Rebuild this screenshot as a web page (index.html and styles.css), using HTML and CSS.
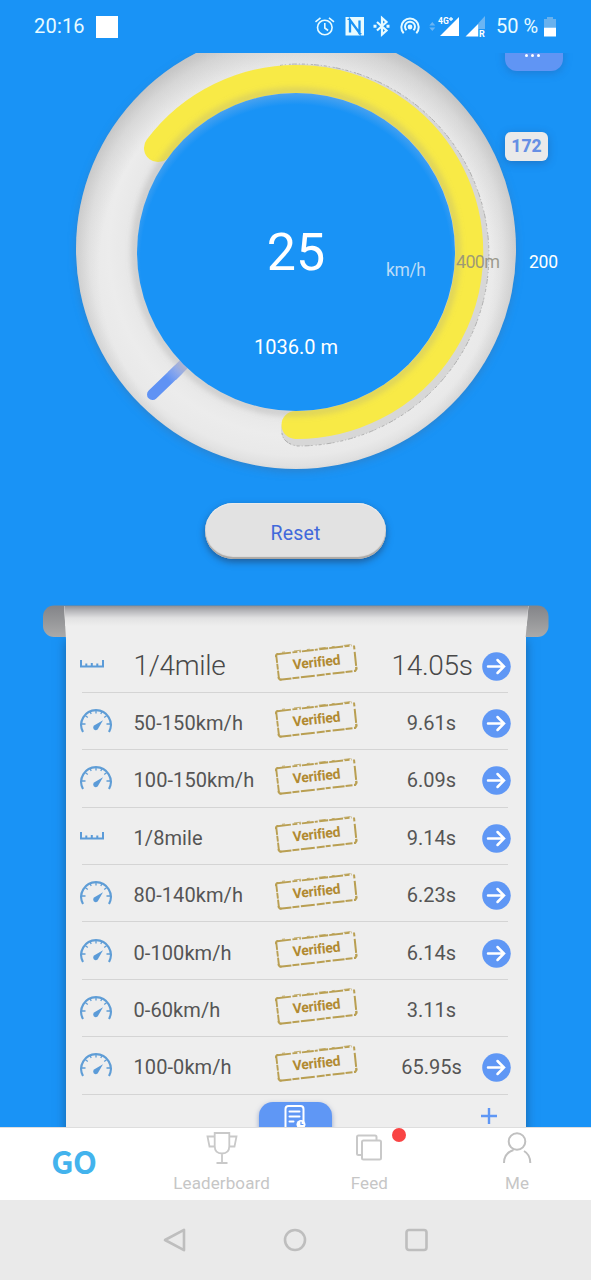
FILE: index.html
```html
<!DOCTYPE html>
<html lang="en">
<head>
<meta charset="utf-8">
<title>Performance</title>
<link rel="stylesheet" href="styles.css">
</head>
<body>
<svg class="defs" width="0" height="0">
  <symbol id="ruler" viewBox="0 0 24 10"><path d="M1 1v6.500h22V1M6.300 4.500V7M11.800 4V7M17.300 4.500V7" fill="none" stroke="#5b9bd8" stroke-width="2"/></symbol>
  <symbol id="meter" viewBox="0 0 32 26">
    <path d="M3 24A14.800 14.800 0 1 1 29 24" fill="none" stroke="#5f9dd6" stroke-width="2.100"/>
    <path d="M2 16h3.500M26.500 16h3.500M5.500 7.800l2.300 1.700M10 3.500l1.200 2.500M16 2v3.500M22 3.500l-1.200 2.500M26.500 7.800l-2.300 1.700" fill="none" stroke="#5f9dd6" stroke-width="1.300"/>
    <path d="M23 12.300 18.500 20A2.700 2.700 0 1 1 15.300 16.800Z" fill="#5b9bd8"/>
  </symbol>
  <symbol id="arrow" viewBox="0 0 29 29"><circle cx="14.500" cy="14.500" r="14.300" fill="#5f97f5"/><path d="M6 14.500h16M15.500 8l6.500 6.500-6.500 6.500" fill="none" stroke="#fff" stroke-width="2.500" stroke-linecap="round"/></symbol>
  <symbol id="frame" viewBox="0 0 84 40">
    <g fill="none" stroke="#b99f52">
      <path d="M3 11.200 78 2.500" stroke-width="1.900" stroke-dasharray="14 1.500 5 2 1.500 1 12 1 3 1.500 9 1"/>
      <path d="M8 9.300 77 1.600" stroke-width=".8" stroke-dasharray="3 9 7 6"/>
      <path d="M80 2.500 82.500 26.500" stroke-width="2" stroke-dasharray="4 2.500 14 1"/>
      <path d="M5.500 36.800 82 27.800" stroke-width="2" stroke-dasharray="12 1 7 1.500 14 2 8 1 5 2"/>
      <path d="M2.200 12 5 36" stroke-width="1.900" stroke-dasharray="8 .8 6 1"/>
      <path d="M2 14q-.5-3 2-3M4.500 34q0 3 3 2.500M82.200 24q.8 3.500-2 4" stroke-width="1.900"/>
    </g>
  </symbol>
</svg>

<div class="phone">
  <header class="status">
    <span class="clock">20:16</span>
    <span class="notice"></span>
    <svg class="status-icons" width="172" height="24" viewBox="314 15 172 24" fill="none" stroke="#e8fbff" stroke-width="1.600">
      <circle cx="324.800" cy="27.500" r="7.300"/><path d="M324.800 23v5l3.300 2.500M315.500 21.800l5-4M334 21.800l-5-4"/>
      <path d="M345.500 17H364v18.500h-18.500Z" fill="#e8fbff" stroke="none"/><path d="M350 32.500V20l9.500 13V20.500" stroke="#1993f6" stroke-width="2.300"/><path d="M347.500 19.300h3M358.500 33.700h3" stroke="#1993f6" stroke-width="1.300"/>
      <path d="M377 22l9.500 8.500-4.500 4V18l4.500 4-9.500 8.500" stroke-width="2.200"/><path d="M373.500 26.300h3M386.500 26.300h3" stroke-width="3"/>
      <path d="M403.700 33.200a8.700 8.700 0 1 1 12.600 0M406.500 30.200a5 5 0 1 1 7 0" stroke-width="2"/><circle cx="410" cy="27" r="2.400" fill="#e8fbff" stroke="none"/>
      <path d="M429.300 25.500l3-3.500 3 3.500ZM429.300 27.500l3 3.500 3-3.500Z" fill="#6bb5f3" stroke="none"/>
      <path d="M440 36 459 17v19ZM465.500 36.500l13-13v13Z" fill="#fff" stroke="none"/><path d="M478.500 23l6.500-7v13h-6.500Z" fill="#6bb5f3" stroke="none"/>
      <path d="M478.500 29h8v9h-8Z" fill="#1993f6" stroke="none"/>
      <text class="net" x="438" y="23.500">4G</text><path d="M449 19h4M451 17v4" stroke-width="1.300"/><text class="roam" x="479" y="36.500">R</text>
    </svg>
    <span class="percent">50 %</span>
    <svg width="12" height="21" viewBox="0 0 12 21"><path d="M3 1h6v2h3v8H0V3h3Z" fill="#68b1ee"/><path d="M0 11.500h12V20.500H0Z" fill="#fff"/></svg>
  </header>

  <main class="content">
    <section class="gauge">
      <svg class="dial" width="591" height="440" viewBox="0 53 591 440">
        <defs>
          <radialGradient id="ring" gradientUnits="userSpaceOnUse" cx="296" cy="249" r="220">
            <stop offset=".72" stop-color="#dfdfdf"/><stop offset=".77" stop-color="#e8e8e8"/><stop offset=".85" stop-color="#ececec"/><stop offset=".94" stop-color="#e9e9e9"/><stop offset="1" stop-color="#dedede"/>
          </radialGradient>
          <radialGradient id="edge" gradientUnits="userSpaceOnUse" cx="296" cy="269" r="234">
            <stop offset=".84" stop-color="#777" stop-opacity="0"/><stop offset="1" stop-color="#777" stop-opacity=".24"/>
          </radialGradient>
          <radialGradient id="hole" gradientUnits="userSpaceOnUse" cx="296" cy="260" r="167">
            <stop offset=".93" stop-color="#1993f6"/><stop offset="1" stop-color="#4aa2ef"/>
          </radialGradient>
          <linearGradient id="tick" gradientUnits="userSpaceOnUse" x1="168" y1="380" x2="184" y2="365"><stop offset="0" stop-color="#5f92f4"/><stop offset="1" stop-color="#b5bde4"/></linearGradient>
          <filter id="soft" x="-10%" y="-10%" width="120%" height="120%"><feGaussianBlur stdDeviation="5"/></filter>
          <filter id="soft2" x="-10%" y="-10%" width="120%" height="120%"><feGaussianBlur stdDeviation="3"/></filter>
        </defs>
        <circle cx="296" cy="252" r="219" fill="#456f9c" opacity=".5" filter="url(#soft)"/>
        <circle cx="296" cy="249" r="220" fill="url(#ring)"/>
        <circle cx="296" cy="249" r="220" fill="url(#edge)"/>
        <g fill="none" stroke-linecap="round">
          <path d="M299 80A175 175 0 0 1 297 430" stroke="#d7d7d7" stroke-width="32"/>
          <path d="M280 65.500Q288 64 299 64A191 191 0 0 1 297 446Q283 443 282 433" stroke="#aaa" stroke-width=".9" stroke-dasharray="3 2 1 3 2 1 5 2 1 2" stroke-linecap="butt"/>
          <path d="M158 148A173 173 0 1 1 295.500 425" stroke="#f8ea46" stroke-width="28"/>
        </g>
        <path d="M178 370 152.500 394.500" stroke="url(#tick)" stroke-width="11" stroke-linecap="round"/>
        <path d="M172 376l12-12" stroke="url(#tick)" stroke-width="11"/>
        <circle cx="296" cy="252" r="161" fill="none" stroke="#999" stroke-opacity=".35" stroke-width="6" filter="url(#soft2)"/>
        <circle cx="296" cy="252" r="159" fill="url(#hole)"/>
        <g class="dial-labels">
          <text x="296" y="269.500" font-size="52" text-anchor="middle">25</text>
          <text x="296" y="354" font-size="20" text-anchor="middle" textLength="84">1036.0 m</text>
          <text x="386" y="276" font-size="17.500" fill="#bcdcf7" textLength="40">km/h</text>
          <text x="456" y="268" font-size="18" fill="#8f8c7d" fill-opacity=".85" textLength="44">400m</text>
          <text x="529" y="268" font-size="17.500" textLength="29">200</text>
        </g>
      </svg>
      <div class="more"><i></i><i></i><i></i></div>
      <div class="badge">172</div>
    </section>

    <button class="reset">Reset</button>

    <section class="sheet">
      <svg class="roll" width="507" height="34" viewBox="42 605 507 34">
        <defs>
          <linearGradient id="rod" x2="0" y2="1"><stop offset="0" stop-color="#838488"/><stop offset="1" stop-color="#aaa"/></linearGradient>
          <linearGradient id="fold" x2="0" y2="1"><stop offset="0" stop-color="#929297"/><stop offset=".2" stop-color="#b1b1b5"/><stop offset=".6" stop-color="#e1e1e2"/><stop offset="1" stop-color="#eee"/></linearGradient>
        </defs>
        <rect x="43" y="605.500" width="505.500" height="31.500" rx="11" fill="url(#rod)"/>
        <path d="M64 606H528.500L525.500 639H66Z" fill="#eee"/><path d="M64.300 606H528.200L526.700 626H65.300Z" fill="url(#fold)"/>
      </svg>
      <div class="paper">
        <div class="row lead"><svg class="ruler"><use href="#ruler"/></svg><span class="name">1/4mile</span><span class="stamp"><svg><use href="#frame"/></svg><b>Verified</b></span><span class="time">14.05s</span><svg class="go"><use href="#arrow"/></svg></div>
        <div class="row"><svg class="meter"><use href="#meter"/></svg><span class="name">50-150km/h</span><span class="stamp"><svg><use href="#frame"/></svg><b>Verified</b></span><span class="time">9.61s</span><svg class="go"><use href="#arrow"/></svg></div>
        <div class="row"><svg class="meter"><use href="#meter"/></svg><span class="name">100-150km/h</span><span class="stamp"><svg><use href="#frame"/></svg><b>Verified</b></span><span class="time">6.09s</span><svg class="go"><use href="#arrow"/></svg></div>
        <div class="row"><svg class="ruler"><use href="#ruler"/></svg><span class="name">1/8mile</span><span class="stamp"><svg><use href="#frame"/></svg><b>Verified</b></span><span class="time">9.14s</span><svg class="go"><use href="#arrow"/></svg></div>
        <div class="row"><svg class="meter"><use href="#meter"/></svg><span class="name">80-140km/h</span><span class="stamp"><svg><use href="#frame"/></svg><b>Verified</b></span><span class="time">6.23s</span><svg class="go"><use href="#arrow"/></svg></div>
        <div class="row"><svg class="meter"><use href="#meter"/></svg><span class="name">0-100km/h</span><span class="stamp"><svg><use href="#frame"/></svg><b>Verified</b></span><span class="time">6.14s</span><svg class="go"><use href="#arrow"/></svg></div>
        <div class="row"><svg class="meter"><use href="#meter"/></svg><span class="name">0-60km/h</span><span class="stamp"><svg><use href="#frame"/></svg><b>Verified</b></span><span class="time">3.11s</span></div>
        <div class="row"><svg class="meter"><use href="#meter"/></svg><span class="name">100-0km/h</span><span class="stamp"><svg><use href="#frame"/></svg><b>Verified</b></span><span class="time">65.95s</span><svg class="go"><use href="#arrow"/></svg></div>
        <div class="actions">
          <div class="report"><svg width="26" height="28" viewBox="0 0 26 28" fill="none" stroke="#fff" stroke-width="2" stroke-linecap="round"><path d="M3.500 26V5q0-3 3-3h12q3 0 3 3v12M7.500 7.500h10M7.500 12.500h10M7.500 17.500h4"/><circle cx="19" cy="20.500" r="4.500" fill="#fff" stroke="none"/><path d="M19 18v2.500h2" stroke="#5f97f5" stroke-width="1.200"/></svg></div>
          <svg class="plus" width="16" height="16" viewBox="0 0 16 16"><path d="M8 0v16M0 8h16" stroke="#5f97f5" stroke-width="2.400"/></svg>
        </div>
      </div>
    </section>
  </main>

  <nav class="tabs">
    <div class="tab active">GO</div>
    <div class="tab"><svg width="32" height="34" viewBox="0 0 32 34" fill="none" stroke="#c9c9c9" stroke-width="1.800"><path d="M8.700 2h14.600v13q0 7.500-7.300 7.500T8.700 15ZM8.700 5.500H1.500l2 10h5.500M23.300 5.500h7.200l-2 10H23M16 22.500v9.500M10.500 32h11"/></svg><span>Leaderboard</span></div>
    <div class="tab"><svg width="32" height="34" viewBox="0 0 32 34" fill="none" stroke="#c9c9c9" stroke-width="2"><rect x="9" y="9.500" width="19" height="19" rx="1.500"/><path d="M9 24H5.500q-1.500 0-1.500-1.500V6q0-1.500 1.500-1.500H22q1.500 0 1.500 1.500v3.500"/></svg><span>Feed</span><i class="dot"></i></div>
    <div class="tab"><svg width="32" height="34" viewBox="0 0 32 34" fill="none" stroke="#c0c0c0" stroke-width="2"><circle cx="16" cy="10.500" r="8.300"/><path d="M3 32q0-10 9.500-13M23 20q6.300 3.500 6.300 12"/></svg><span>Me</span></div>
  </nav>

  <footer class="system">
    <svg width="24" height="26" viewBox="0 0 24 26"><path d="M3 13 22 2.800v20.400Z" fill="none" stroke="#bebebe" stroke-width="2.600" stroke-linejoin="round"/></svg>
    <svg width="24" height="26" viewBox="0 0 24 26"><circle cx="12" cy="13" r="10" fill="none" stroke="#bebebe" stroke-width="2.600"/></svg>
    <svg width="24" height="26" viewBox="0 0 24 26"><rect x="2.500" y="3" width="20" height="20" rx="2.500" fill="none" stroke="#bebebe" stroke-width="2.600"/></svg>
  </footer>
</div>
</body>
</html>
```
FILE: styles.css
```css
* { box-sizing: border-box; }
body { margin: 0; font-family: Roboto, sans-serif; background: #1993f6; }
svg { display: block; flex: none; }
.defs { position: absolute; }
.phone { width: 591px; height: 1280px; display: flex; flex-direction: column; overflow: hidden; background: #1993f6; }

.status { height: 53px; flex: none; display: flex; align-items: center; padding: 0 35px 0 34px; color: #e8fbff; }
.clock { font-size: 20px; width: 62px; letter-spacing: .2px; margin-top: -1px; }
.notice { width: 22px; height: 22px; background: #fff; }
.status-icons { margin-left: 196px; }
.net { font: 700 8.5px Roboto, sans-serif; fill: #fff; stroke: none; }
.roam { font: 700 9px Roboto, sans-serif; fill: #fff; stroke: none; }
.percent { font-size: 20px; margin: -1px 0 0 10px; width: 48px; white-space: nowrap; }

.content { height: 1074px; flex: none; overflow: hidden; display: flex; flex-direction: column; align-items: center; }
.gauge { position: relative; width: 591px; height: 450px; flex: none; }
.dial-labels { font-family: Roboto, sans-serif; fill: #fff; }
.more { position: absolute; top: -20px; left: 505px; width: 58px; height: 38px; border-radius: 12px; background: #6095f4; box-shadow: 0 2px 8px rgba(40,90,160,.4); display: flex; justify-content: center; gap: 3px; padding: 21px 3px 0 0; }
.more i { width: 3px; height: 3px; border-radius: 50%; background: #fff; }
.badge { position: absolute; top: 79px; left: 505px; width: 43px; height: 29px; border-radius: 6px; background: #eaeaea; color: #668fe4; font-weight: 800; font-size: 17.5px; line-height: 29px; text-align: center; box-shadow: 0 2px 9px rgba(40,80,140,.45); }

.reset { width: 181px; height: 56px; flex: none; padding: 4px 0 0; border: 0; border-radius: 28px; background: #e2e2e2; color: #4169db; font: 400 19.5px Roboto, sans-serif; letter-spacing: .2px; box-shadow: inset 0 -2px 1px #aba8a5, inset 0 1px 1px #ececec, 0 3px 7px rgba(35,65,105,.65); }

.sheet { width: 507px; margin-top: 46px; display: flex; flex-direction: column; align-items: center; }
.roll { position: relative; z-index: 1; }
.paper { width: 460px; height: 500px; margin-top: -3.5px; padding: 0 14px; background: #eee; box-shadow: 0 4px 10px rgba(25,60,100,.55); }
.row { height: 57.4px; display: grid; grid-template-columns: 54px 140px 84px 34px 80px 10px 32px; align-items: center; color: #555; background: linear-gradient(#d4d4d4,#d4d4d4) 2px 100% / 426px 1px no-repeat; }
.name { grid-column: 2; font-size: 20px; letter-spacing: .08px; padding-top: 3px; white-space: nowrap; }
.time { grid-column: 5; font-size: 20px; text-align: center; padding-top: 3px; white-space: nowrap; }
.lead .name, .lead .time { font-size: 28px; font-weight: 300; letter-spacing: -.3px; padding-top: 3px; color: #484848; }
.ruler { width: 24px; height: 10px; margin-top: -1px; }
.meter { width: 32px; height: 26px; margin-top: -1px; }
.stamp { grid-column: 3; width: 84px; height: 40px; margin-top: -3px; display: grid; place-items: center; }
.stamp > * { grid-area: 1 / 1; }
.stamp svg { width: 84px; height: 40px; }
.stamp b { font: 700 14px/16px Roboto, sans-serif; letter-spacing: -.2px; color: #b18a32; transform: translate(.5px, -1px) rotate(-6deg); }
.go { grid-column: 7; width: 29px; height: 29px; margin-top: 4px; }
.actions { height: 34px; display: flex; padding: 7px 0 0 179px; }
.report { width: 73px; height: 40px; border-radius: 14px; background: #5f97f5; box-shadow: 0 2px 5px rgba(60,90,160,.5); display: flex; justify-content: center; padding-top: 2px; }
.plus { margin: 6px 0 0 149px; }

.tabs { position: relative; height: 73px; flex: none; background: #fff; border-top: 1px solid #dedede; display: grid; grid-template-columns: repeat(4, 1fr); }
.tab { position: relative; display: flex; flex-direction: column; align-items: center; padding-top: 3px; font-size: 17px; color: #c6c6c6; letter-spacing: .1px; }
.tab span { margin-top: 8px; line-height: 20px; }
.active { font-family: "Noto Sans CJK SC", "Open Sans", sans-serif; font-weight: 700; font-size: 31px; line-height: 60px; color: #43b3ed; letter-spacing: -.3px; }
.dot { position: absolute; left: 96px; top: 0; width: 14px; height: 14px; border-radius: 50%; background: #f94444; }
.system { height: 80px; flex: none; background: #eaeaea; display: flex; justify-content: center; gap: 97px; align-items: center; padding-right: 1px; }
```
